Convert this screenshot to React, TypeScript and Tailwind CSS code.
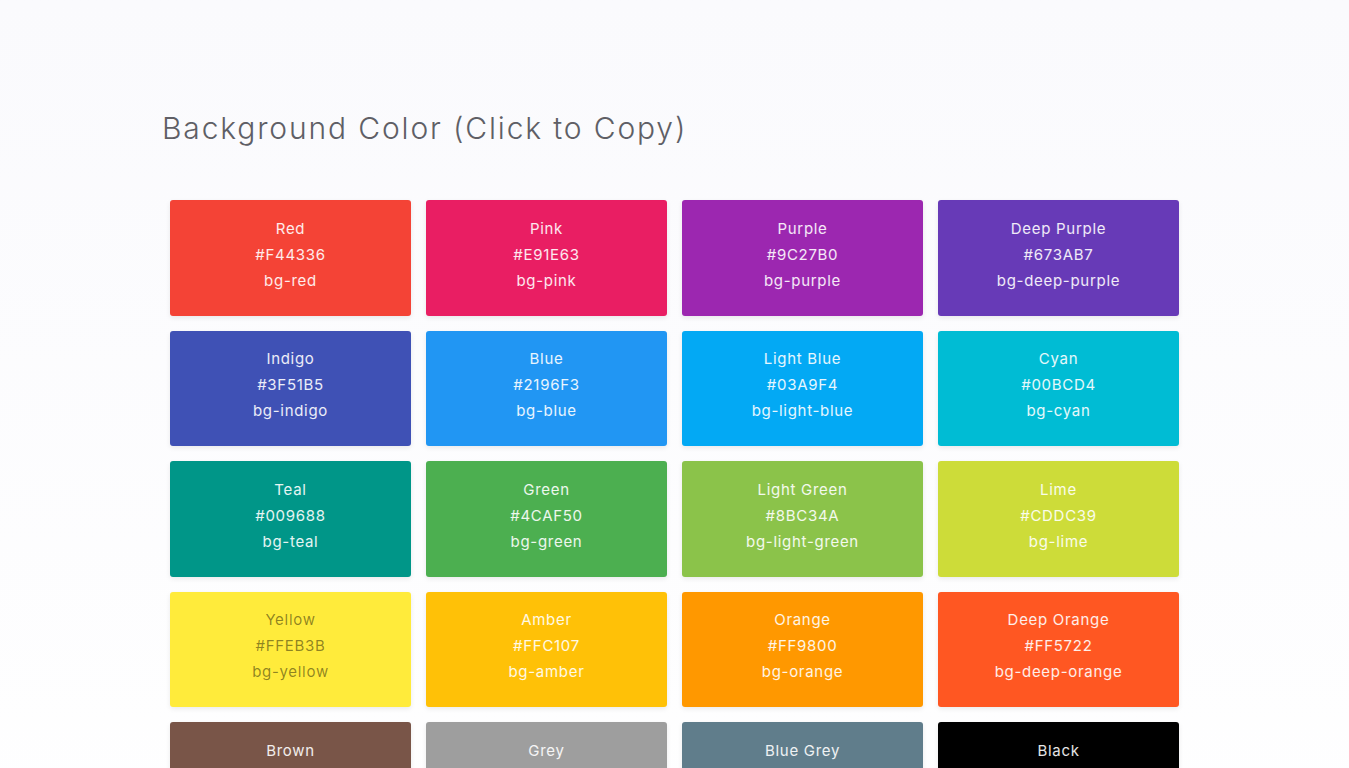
const colors = [
  { name: "Red", hex: "#F44336", cls: "bg-red", bg: "bg-[#F44336]" },
  { name: "Pink", hex: "#E91E63", cls: "bg-pink", bg: "bg-[#E91E63]" },
  { name: "Purple", hex: "#9C27B0", cls: "bg-purple", bg: "bg-[#9C27B0]" },
  { name: "Deep Purple", hex: "#673AB7", cls: "bg-deep-purple", bg: "bg-[#673AB7]" },
  { name: "Indigo", hex: "#3F51B5", cls: "bg-indigo", bg: "bg-[#3F51B5]" },
  { name: "Blue", hex: "#2196F3", cls: "bg-blue", bg: "bg-[#2196F3]" },
  { name: "Light Blue", hex: "#03A9F4", cls: "bg-light-blue", bg: "bg-[#03A9F4]" },
  { name: "Cyan", hex: "#00BCD4", cls: "bg-cyan", bg: "bg-[#00BCD4]" },
  { name: "Teal", hex: "#009688", cls: "bg-teal", bg: "bg-[#009688]" },
  { name: "Green", hex: "#4CAF50", cls: "bg-green", bg: "bg-[#4CAF50]" },
  { name: "Light Green", hex: "#8BC34A", cls: "bg-light-green", bg: "bg-[#8BC34A]" },
  { name: "Lime", hex: "#CDDC39", cls: "bg-lime", bg: "bg-[#CDDC39]" },
  { name: "Yellow", hex: "#FFEB3B", cls: "bg-yellow", bg: "bg-[#FFEB3B]", dark: true },
  { name: "Amber", hex: "#FFC107", cls: "bg-amber", bg: "bg-[#FFC107]" },
  { name: "Orange", hex: "#FF9800", cls: "bg-orange", bg: "bg-[#FF9800]" },
  { name: "Deep Orange", hex: "#FF5722", cls: "bg-deep-orange", bg: "bg-[#FF5722]" },
  { name: "Brown", hex: "#795548", cls: "bg-brown", bg: "bg-[#795548]" },
  { name: "Grey", hex: "#9E9E9E", cls: "bg-grey", bg: "bg-[#9E9E9E]" },
  { name: "Blue Grey", hex: "#607D8B", cls: "bg-blue-grey", bg: "bg-[#607D8B]" },
  { name: "Black", hex: "#000000", cls: "bg-black", bg: "bg-[#000000]" },
];

export default function App() {
  return (
    <div
      className="min-h-screen bg-gradient-to-b from-[#fafafd] to-[#ffffff] pt-[110px] pb-16"
      style={{ fontFamily: "Inter, 'Open Sans', sans-serif" }}
    >
      <div className="mx-auto w-[1009px]">
        <h1 className="-ml-[8px] text-[30px] leading-[36px] font-light tracking-[1.85px] text-[#5f5f66]">
          Background Color (Click to Copy)
        </h1>

        <div className="mt-[54px] grid grid-cols-4 gap-x-[15px] gap-y-[15px]">
          {colors.map((c) => (
            <button
              key={c.cls}
              className={`${c.bg} flex h-[115.5px] cursor-pointer flex-col items-center justify-center rounded-[3px] pb-[6px] text-[15px] leading-[26px] tracking-[0.7px] shadow-[0_2px_5px_rgba(0,0,0,0.08)] ${
                c.dark ? "text-black/45" : "text-white/90"
              }`}
            >
              <span>{c.name}</span>
              <span>{c.hex}</span>
              <span>{c.cls}</span>
            </button>
          ))}
        </div>
      </div>
    </div>
  );
}
